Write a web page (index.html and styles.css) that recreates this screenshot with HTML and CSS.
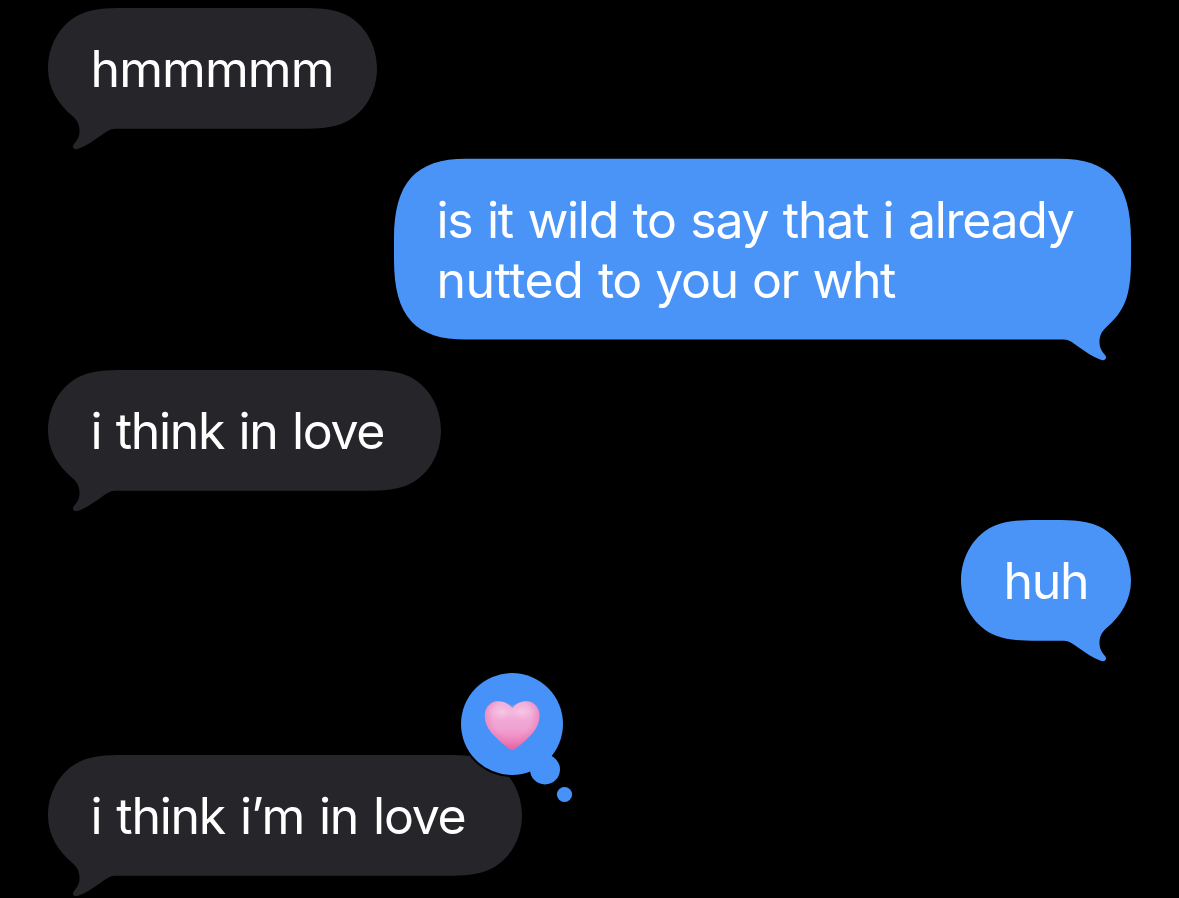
FILE: index.html
```html
<!DOCTYPE html>
<html lang="en">
<head>
<meta charset="utf-8">
<title>Messages</title>
<link rel="stylesheet" href="styles.css">
</head>
<body>
<main class="thread">
  <div class="bubble received hmm">
    <svg class="shape" width="329" height="143" viewBox="0 0 329 143"><path d="M0 60.500C0 80 10 96 25 108.500C30 113 31.500 117.500 31.500 123C31.500 128.500 29.500 132 26 136C23.500 139 25.500 142.300 30.300 140.800C38 138 46 132.500 53.700 127C58 124 62 120.800 67 120.800H252C273 120.800 283 119.600 293 116C316 107.500 329 84 329 60.500C329 37 316 13.300 293 4.800C283 1.200 273 0 252 0H77C56 0 46 1.200 36 4.800C13 13.300 0 37 0 60.500Z"/></svg>
    <p class="text">hmmmmm</p>
  </div>
  <div class="bubble sent wild">
    <svg class="shape" width="737" height="203" viewBox="0 0 737 203"><path d="M737 101C737 140 729 153 712 168.500C707 173 705.500 177.500 705.500 183C705.500 188.500 707.500 192 711 196C713.500 199 711.500 202.300 706.700 200.800C699 198 691 192.500 683.300 187C679 184 675 180.600 670 180.600H72C22 180.600 0 158 0 101V80C0 23 22 -.3 72 -.3H665C715 -.3 737 23 737 80Z"/></svg>
    <p class="text">is it wild to say that i already<br><span class="second"><span class="loose">nutted</span> to you or wht</span></p>
  </div>
  <div class="bubble received think">
    <svg class="shape" width="393" height="143" viewBox="0 0 393 143"><path d="M0 60.500C0 80 10 96 25 108.500C30 113 31.500 117.500 31.500 123C31.500 128.500 29.500 132 26 136C23.500 139 25.500 142.300 30.300 140.800C38 138 46 132.500 53.700 127C58 124 62 120.800 67 120.800H316C337 120.800 347 119.600 357 116C380 107.500 393 84 393 60.500C393 37 380 13.300 357 4.800C347 1.200 337 0 316 0H77C56 0 46 1.200 36 4.800C13 13.300 0 37 0 60.500Z"/></svg>
    <p class="text">i think in love</p>
  </div>
  <div class="bubble sent huh">
    <svg class="shape" width="170" height="143" viewBox="0 0 170 143"><path d="M170 60.500C170 80 160 96 145 108.500C140 113 138.500 117.500 138.500 123C138.500 128.500 140.500 132 144 136C146.500 139 144.500 142.300 139.700 140.800C132 138 124 132.500 116.300 127C112 124 108 120.800 103 120.800H77C56 120.800 46 119.600 36 116C13 107.500 0 84 0 60.500C0 37 13 13.300 36 4.800C46 1.200 56 0 77 0H93C114 0 124 1.200 134 4.800C157 13.300 170 37 170 60.500Z"/></svg>
    <p class="text">huh</p>
  </div>
  <div class="bubble received love">
    <svg class="shape" width="474" height="143" viewBox="0 0 474 143"><path d="M0 60.500C0 80 10 96 25 108.500C30 113 31.500 117.500 31.500 123C31.500 128.500 29.500 132 26 136C23.500 139 25.500 142.300 30.300 140.800C38 138 46 132.500 53.700 127C58 124 62 120.800 67 120.800H397C418 120.800 428 119.600 438 116C461 107.500 474 84 474 60.500C474 37 461 13.300 438 4.800C428 1.200 418 0 397 0H77C56 0 46 1.200 36 4.800C13 13.300 0 37 0 60.500Z"/></svg>
    <p class="text">i think i’m in love</p>
    <svg class="reaction" width="120" height="136" viewBox="0 0 120 136" role="img" aria-label="Pink heart">
      <defs>
        <linearGradient id="heart" x1="0" y1="0" x2="0" y2="1">
          <stop offset="0" stop-color="#f0b0dc"/>
          <stop offset=".55" stop-color="#f0a3d3"/>
          <stop offset=".85" stop-color="#ee86bd"/>
          <stop offset="1" stop-color="#e65a9b"/>
        </linearGradient>
        <radialGradient id="shine" cx=".5" cy=".5" r=".5">
          <stop offset="0" stop-color="#fad3ea" stop-opacity=".75"/>
          <stop offset="1" stop-color="#f6b9df" stop-opacity="0"/>
        </radialGradient>
        <radialGradient id="rim" gradientUnits="userSpaceOnUse" cx="56" cy="49" r="34">
          <stop offset=".55" stop-color="#e667a8" stop-opacity="0"/>
          <stop offset="1" stop-color="#e667a8" stop-opacity=".75"/>
        </radialGradient>
      </defs>
      <circle class="halo" cx="56" cy="56" r="53"/>
      <g class="cloud"><circle cx="56" cy="56" r="51"/><circle cx="89" cy="101.500" r="15"/><circle cx="108.500" cy="126.500" r="7.600"/></g>
      <path fill="url(#heart)" d="M56.300 40C52.500 35.500 48 33.200 42 33.200C34.500 33.200 28.800 39.500 28.800 47.500C28.800 61 39 69 51.500 79.500C55 82.700 57.600 82.700 61 79.500C73.500 69 83.500 61 83.500 47.500C83.500 39.500 78 33.200 70.500 33.200C64.500 33.200 60 35.500 56.300 40Z"/>
      <path fill="url(#rim)" d="M56.300 40C52.500 35.500 48 33.200 42 33.200C34.500 33.200 28.800 39.500 28.800 47.500C28.800 61 39 69 51.500 79.500C55 82.700 57.600 82.700 61 79.500C73.500 69 83.500 61 83.500 47.500C83.500 39.500 78 33.200 70.500 33.200C64.500 33.200 60 35.500 56.300 40Z"/>
      <ellipse cx="46" cy="44" rx="16" ry="10" fill="url(#shine)"/>
      <ellipse cx="66" cy="44" rx="16" ry="10" fill="url(#shine)"/>
    </svg>
  </div>
</main>
</body>
</html>
```
FILE: styles.css
```css
body {
  margin: 0;
  background: #000;
  overflow: hidden;
}

.thread {
  box-sizing: border-box;
  width: 1179px;
  height: 898px;
  padding: 8px 48px 0;
  display: flex;
  flex-direction: column;
  align-items: flex-start;
  overflow: hidden;
  font-family: Inter, "Liberation Sans", sans-serif;
  font-size: 50px;
  line-height: 60.5px;
  letter-spacing: -1.3px;
  color: #fff;
}

.bubble {
  box-sizing: border-box;
  flex: none;
  position: relative;
  height: 121px;
  padding: 31px 0 0 42.5px;
  white-space: nowrap;
}

.sent { align-self: flex-end; }

.shape {
  position: absolute;
  left: 0;
  top: 0;
  overflow: visible;
  fill: #26252a;
}

.sent .shape { fill: #4a94f8; }

.text {
  position: relative;
  margin: 0;
}

.hmm { width: 329px; letter-spacing: -0.9px; }
.wild { width: 737px; height: 181px; margin-top: 29.5px; word-spacing: 1.8px; }
.think { width: 393px; margin-top: 30.5px; word-spacing: 1.6px; }
.huh { width: 170px; margin-top: 29px; }
.love { width: 474px; margin-top: 114px; word-spacing: 2.3px; }

.second {
  letter-spacing: -1.5px;
  word-spacing: 2px;
}

.loose { letter-spacing: -0.5px; }

.reaction {
  position: absolute;
  left: 408px;
  top: -87px;
}

.halo { fill: #000; }
.cloud { fill: #4692f8; }
```
